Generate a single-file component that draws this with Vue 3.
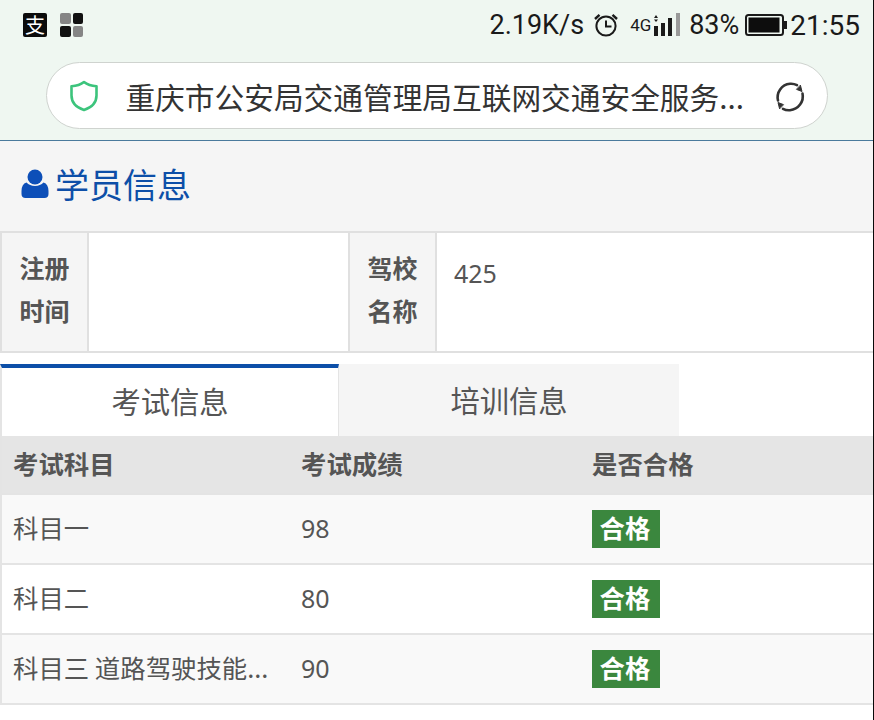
<script setup>
const rows = [
  { name: '科目一', score: '98', result: '合格' },
  { name: '科目二', score: '80', result: '合格' },
  { name: '科目三 道路驾驶技能...', score: '90', result: '合格' }
]
</script>

<template>
  <div class="page">
    <header class="top">
      <div class="status">
        <div class="status-left">
          <span class="alipay">支</span>
          <span class="apps"><i class="g"></i><i></i><i></i><i class="g"></i></span>
        </div>
        <div class="status-right">
          <span class="speed">2.19K/s</span>
          <svg class="alarm" width="26" height="26" viewBox="0 0 26 26" fill="none" stroke="#1a1a1a">
            <circle cx="13" cy="14" r="9.6" stroke-width="2" />
            <path d="M13 8.5V14.5H18.5" stroke-width="2" />
            <path d="M2 7L6.5 2.8M24 7L19.5 2.8" stroke-width="2.4" />
          </svg>
          <span class="net">4G</span>
          <svg class="signal" width="28" height="24" viewBox="0 0 28 24" fill="#1a1a1a">
            <path d="M4 2L6 5H2Z" />
            <path d="M4 9L2 6.500H6Z" />
            <rect x="2" y="13" width="4" height="10" />
            <rect x="9" y="10" width="4" height="13" />
            <rect x="16" y="5" width="4" height="18" />
            <rect x="24" y="0" width="4" height="23" fill="#9a9a9a" />
          </svg>
          <span class="pct">83%</span>
          <svg class="battery" width="42" height="22" viewBox="0 0 42 22">
            <rect x="1" y="1" width="37" height="20" rx="2.500" fill="none" stroke="#1a1a1a" stroke-width="2" />
            <rect x="3.500" y="3.500" width="31" height="15" fill="#0d0d0d" />
            <rect x="39" y="7" width="3" height="8" fill="#1a1a1a" />
          </svg>
          <span class="time">21:55</span>
        </div>
      </div>
      <div class="address">
        <svg class="shield" width="30" height="32" viewBox="0 0 30 32" fill="none">
          <path d="M15 2C18.500 4.800 22.500 6 27.500 6.300V15.500C27.500 22.500 22.500 27.500 15 30C7.500 27.500 2.500 22.500 2.500 15.500V6.300C7.500 6 11.500 4.800 15 2Z" stroke="#3cc47c" stroke-width="2.600" stroke-linejoin="round" />
        </svg>
        <span class="url">重庆市公安局交通管理局互联网交通安全服务...</span>
        <svg class="reload" width="34" height="34" viewBox="0 0 34 34" fill="none" stroke="#333" stroke-width="2.600" stroke-linecap="round">
          <path d="M5 20.500C3.200 12.500 8.500 4.500 17 3.800C19.500 3.600 21.800 4 24 5.200" />
          <path d="M29.500 13.500C31.200 21.500 25.500 29.500 17 30.200C14.500 30.400 12.200 30 10 28.800" />
          <path d="M27.500 5.500L29 11.500L23.800 9.500Z" fill="#333" stroke-width="1" stroke-linejoin="round" />
          <path d="M6.500 28.500L5 22.500L10.200 24.500Z" fill="#333" stroke-width="1" stroke-linejoin="round" />
        </svg>
      </div>
    </header>

    <section class="title-bar">
      <svg class="user" width="28" height="30" viewBox="0 0 28 30" fill="#0d4fb8">
        <circle cx="14" cy="8" r="7.500" />
        <path d="M5.500 13.500C7.500 15.800 10.500 17 14 17C17.500 17 20.500 15.800 22.500 13.500C25.800 14.500 27.500 17.500 27.500 22V25C27.500 27.500 26 29 23.500 29H4.500C2 29 .5 27.500 .5 25V22C.5 17.500 2.200 14.500 5.500 13.500Z" />
      </svg>
      <h1>学员信息</h1>
    </section>

    <section class="info">
      <div class="label">注册<br />时间</div>
      <div class="value"></div>
      <div class="label">驾校<br />名称</div>
      <div class="value num">425</div>
    </section>

    <nav class="tabs">
      <div class="tab active">考试信息</div>
      <div class="tab">培训信息</div>
    </nav>

    <section class="results">
      <div class="row head">
        <div class="cell">考试科目</div>
        <div class="cell">考试成绩</div>
        <div class="cell">是否合格</div>
      </div>
      <div v-for="row in rows" :key="row.name" class="row">
        <div class="cell">{{ row.name }}</div>
        <div class="cell num">{{ row.score }}</div>
        <div class="cell"><span class="badge">{{ row.result }}</span></div>
      </div>
    </section>
  </div>
</template>

<style scoped>
.page {
  width: 874px;
  height: 720px;
  box-sizing: border-box;
  border-right: 1px solid #0a0a0a;
  overflow: hidden;
  background: #fff;
  color: #555;
  font-family: "Noto Sans", "Noto Sans CJK SC", sans-serif;
}
.top {
  height: 141px;
  box-sizing: border-box;
  background: #eff7f1;
  border-bottom: 1px solid #4a7a9c;
}
.status {
  height: 62px;
  box-sizing: border-box;
  padding: 0 13px 12px 23px;
  display: flex;
  align-items: center;
  justify-content: space-between;
  color: #1a1a1a;
  font-family: Roboto, sans-serif;
  font-size: 27px;
}
.status-left {
  display: flex;
  gap: 13px;
  align-items: center;
}
.alipay {
  width: 24px;
  height: 24px;
  border-radius: 2px;
  background: #0b0b0b;
  color: #fff;
  font: 20px/24px "Noto Sans CJK SC", sans-serif;
  text-align: center;
}
.apps {
  width: 23px;
  height: 24px;
  display: grid;
  grid-template-columns: 1fr 1fr;
  gap: 2px;
}
.apps i {
  background: #111;
  border-radius: 2px;
}
.apps i.g {
  background: #858585;
}
.status-right {
  display: flex;
  align-items: center;
}
.alarm {
  margin-left: 9px;
}
.net {
  margin-left: 11px;
  width: 22px;
  font-size: 17px;
}
.pct {
  margin-left: 9px;
}
.battery {
  margin-left: 6px;
}
.time {
  margin-left: 3px;
  font-size: 28px;
}
.address {
  height: 67px;
  margin: 0 45.500px 0 45.500px;
  box-sizing: border-box;
  border: 1px solid #cfd3cf;
  border-radius: 34px;
  background: #fff;
  display: flex;
  align-items: center;
  padding: 0 20px 0 22px;
  color: #333;
}
.url {
  flex: 1;
  margin-left: 27px;
  padding-top: 2px;
  font-size: 29.700px;
  line-height: 40px;
  white-space: nowrap;
  font-family: "Noto Sans CJK SC", sans-serif;
}
.reload {
  margin-top: 3px;
}
.title-bar {
  height: 90px;
  box-sizing: border-box;
  padding: 0 0 4px 21px;
  background: #f5f5f5;
  display: flex;
  align-items: center;
  gap: 6px;
}
.title-bar h1 {
  margin: 0;
  color: #0d4fa8;
  font: 400 34px/46px "Noto Sans CJK SC", sans-serif;
}
.info {
  height: 122px;
  box-sizing: border-box;
  display: grid;
  grid-template-columns: 89px 259px 89px 1fr;
  border-top: 2px solid #e0e0e0;
  border-bottom: 2px solid #e0e0e0;
}
.label {
  background: #f5f5f5;
  border-left: 2px solid #e0e0e0;
  border-right: 2px solid #e0e0e0;
  text-align: center;
  font: 700 25px/43px "Noto Sans CJK SC", sans-serif;
  padding-top: 13px;
}
.value {
  background: #fff;
}
.num {
  font-size: 25px;
}
.info .num {
  padding: 21px 0 0 17px;
  line-height: 38px;
}
.tabs {
  margin-top: 11px;
  height: 72px;
  display: flex;
}
.tab {
  width: 340px;
  box-sizing: border-box;
  background: #f5f5f5;
  text-align: center;
  font: 400 29.300px/70px "Noto Sans CJK SC", sans-serif;
}
.tab.active {
  width: 339px;
  background: #fff;
  border-top: 4px solid #0d4fa8;
  border-left: 2px solid #e4e4e4;
  border-right: 1px solid #e4e4e4;
  line-height: 64px;
}
.row {
  height: 70px;
  box-sizing: border-box;
  display: grid;
  grid-template-columns: 286px 288px 1fr;
  border-left: 2px solid #e4e4e4;
  border-bottom: 2px solid #e4e4e4;
  font-family: "Noto Sans CJK SC", sans-serif;
  font-size: 25.400px;
}
.row:nth-child(even) {
  background: #f9f9f9;
}
.row.head {
  height: 59px;
  background: #e5e5e5;
  font-weight: 700;
}
.cell {
  display: flex;
  align-items: center;
  padding: 0 0 4px 11px;
  min-width: 0;
  white-space: nowrap;
  box-sizing: border-box;
}
.cell + .cell {
  padding-left: 13px;
}
.cell:last-child {
  padding-left: 16px;
  padding-bottom: 0;
}
.row.head .cell:last-child {
  padding-bottom: 4px;
}
.cell.num {
  font-family: "Noto Sans", sans-serif;
  font-size: 25px;
  padding-bottom: 3px;
}
.badge {
  width: 68px;
  height: 38px;
  box-sizing: border-box;
  padding-right: 2px;
  background: #3b873e;
  color: #fff;
  font-weight: 700;
  line-height: 35px;
  text-align: center;
}
</style>
